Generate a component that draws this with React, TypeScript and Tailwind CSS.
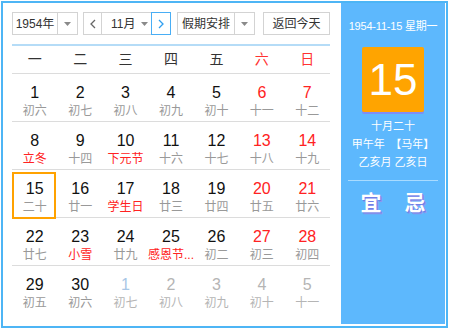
import React from "react";

type Cell = { d: number; l: string; fest?: boolean; other?: boolean; sel?: boolean };

const rows: Cell[][] = [
  [
    { d: 1, l: "初六" },
    { d: 2, l: "初七" },
    { d: 3, l: "初八" },
    { d: 4, l: "初九" },
    { d: 5, l: "初十" },
    { d: 6, l: "十一" },
    { d: 7, l: "十二" },
  ],
  [
    { d: 8, l: "立冬", fest: true },
    { d: 9, l: "十四" },
    { d: 10, l: "下元节", fest: true },
    { d: 11, l: "十六" },
    { d: 12, l: "十七" },
    { d: 13, l: "十八" },
    { d: 14, l: "十九" },
  ],
  [
    { d: 15, l: "二十", sel: true },
    { d: 16, l: "廿一" },
    { d: 17, l: "学生日", fest: true },
    { d: 18, l: "廿三" },
    { d: 19, l: "廿四" },
    { d: 20, l: "廿五" },
    { d: 21, l: "廿六" },
  ],
  [
    { d: 22, l: "廿七" },
    { d: 23, l: "小雪", fest: true },
    { d: 24, l: "廿九" },
    { d: 25, l: "感恩节...", fest: true },
    { d: 26, l: "初二" },
    { d: 27, l: "初三" },
    { d: 28, l: "初四" },
  ],
  [
    { d: 29, l: "初五" },
    { d: 30, l: "初六" },
    { d: 1, l: "初七", other: true },
    { d: 2, l: "初八", other: true },
    { d: 3, l: "初九", other: true },
    { d: 4, l: "初十", other: true },
    { d: 5, l: "十一", other: true },
  ],
];

const weekdays = ["一", "二", "三", "四", "五", "六", "日"];

function Caret() {
  return (
    <svg width="7" height="4" viewBox="0 0 7 4">
      <path d="M0 0 L7 0 L3.5 4 Z" fill="#8a8a8a" />
    </svg>
  );
}

function Chevron({ dir, color }: { dir: "l" | "r"; color: string }) {
  return (
    <svg width="6" height="10" viewBox="0 0 6 10">
      <path
        d={dir === "l" ? "M5 1 L1 5 L5 9" : "M1 1 L5 5 L1 9"}
        fill="none"
        stroke={color}
        strokeWidth="1.3"
      />
    </svg>
  );
}

export default function App() {
  return (
    <div
      className="w-[450px] h-[330px] bg-white pt-px pl-px"
      style={{ fontFamily: '"Liberation Sans", "Noto Sans CJK SC", sans-serif' }}
    >
      <div className="w-[447px] h-[327px] border-2 border-[#4db5f5] flex bg-white">
        {/* Left */}
        <div className="w-[338px] pl-[9px] pt-[9px] flex flex-col">
          {/* Toolbar */}
          <div className="flex items-center h-[23px] text-[12px] text-[#333]">
            <div className="flex h-[23px] w-[66px] border border-[#d3d3d3]">
              <div className="flex-1 flex items-center justify-center">1954年</div>
              <div className="w-[20px] border-l border-[#d3d3d3] flex items-center justify-center">
                <Caret />
              </div>
            </div>
            <div className="flex h-[23px] ml-[5px]">
              <div className="w-[19px] border border-[#d3d3d3] flex items-center justify-center">
                <Chevron dir="l" color="#666" />
              </div>
              <div className="w-[49px] border-y border-[#d3d3d3] flex items-center">
                <span className="ml-[9px]">11月</span>
                <span className="ml-[6px] flex items-center">
                  <Caret />
                </span>
              </div>
              <div className="w-[20px] border border-[#49aef5] flex items-center justify-center">
                <Chevron dir="r" color="#2f9ff0" />
              </div>
            </div>
            <div className="flex h-[23px] w-[78px] ml-[6px] border border-[#d3d3d3]">
              <div className="flex-1 flex items-center justify-center">假期安排</div>
              <div className="w-[20px] border-l border-[#d3d3d3] flex items-center justify-center">
                <Caret />
              </div>
            </div>
            <div className="flex h-[23px] w-[67px] ml-[8px] border border-[#d3d3d3] items-center justify-center">
              返回今天
            </div>
          </div>

          {/* Calendar */}
          <div className="w-[318px] mt-[9px]">
            <div className="h-[2px] bg-[#b5dcf7]" />
            <div className="grid grid-cols-7 h-[28px] border-b border-[#dcdcdc] text-[14px] items-center">
              {weekdays.map((w, i) => (
                <div
                  key={w}
                  className={`text-center ${i >= 5 ? "text-[#ff3333]" : "text-[#333]"}`}
                >
                  {w}
                </div>
              ))}
            </div>
            {rows.map((row, ri) => (
              <div
                key={ri}
                className={`grid grid-cols-7 h-[48px] ${ri < 4 ? "border-b border-[#dcdcdc]" : ""}`}
              >
                {row.map((c, ci) => {
                  const weekend = ci >= 5;
                  let numColor = weekend ? "text-[#ff2222]" : "text-[#111]";
                  let lunarColor = c.fest ? "text-[#ff2222]" : "text-[#999]";
                  if (c.other) {
                    numColor = c.d === 1 ? "text-[#a9c7e6]" : "text-[#b5b5b5]";
                    lunarColor = "text-[#b5b5b5]";
                  }
                  return (
                    <div key={ci} className="relative flex flex-col items-center">
                      {c.sel && (
                        <div className="absolute left-0 top-[2px] w-[44px] h-[47px] border-2 border-[#ffa200]" />
                      )}
                      <div className={`mt-[9px] text-[16px] leading-[20px] ${numColor}`}>{c.d}</div>
                      <div className={`text-[12px] leading-[15px] mt-[1px] whitespace-nowrap ${lunarColor}`}>
                        {c.l}
                      </div>
                    </div>
                  );
                })}
              </div>
            ))}
          </div>
        </div>

        {/* Right panel */}
        <div className="w-[104px] h-[321px] bg-[#5db8fd] flex flex-col items-center text-white">
          <div className="mt-[15px] text-[11px] leading-[16px] tracking-[-0.2px] whitespace-nowrap">
            1954-11-15 星期一
          </div>
          <div className="mt-[13px] w-[62px] h-[65px] bg-[#ffa400] rounded-[2px] flex items-center justify-center shadow-[0_2px_0_#7e8df5]">
            <span className="text-[44px] leading-none font-light">15</span>
          </div>
          <div className="mt-[6px] text-[11px] leading-[17px]">十月二十</div>
          <div className="text-[11px] leading-[17px] mt-[1px] whitespace-nowrap">
            甲午年{"\u2002"}【马年】
          </div>
          <div className="text-[11px] leading-[17px] mt-[1px]">乙亥月 乙亥日</div>
          <div className="mt-[9px] w-[90px] h-px bg-[#a9dbff]" />
          <div
            className="mt-[9px] flex gap-[23px] text-[21px] leading-[26px] font-semibold"
            style={{ textShadow: "1px 1px 0 #6f7ee6, 2px 2px 0 #8b96ee" }}
          >
            <span>宜</span>
            <span>忌</span>
          </div>
        </div>
      </div>
    </div>
  );
}
